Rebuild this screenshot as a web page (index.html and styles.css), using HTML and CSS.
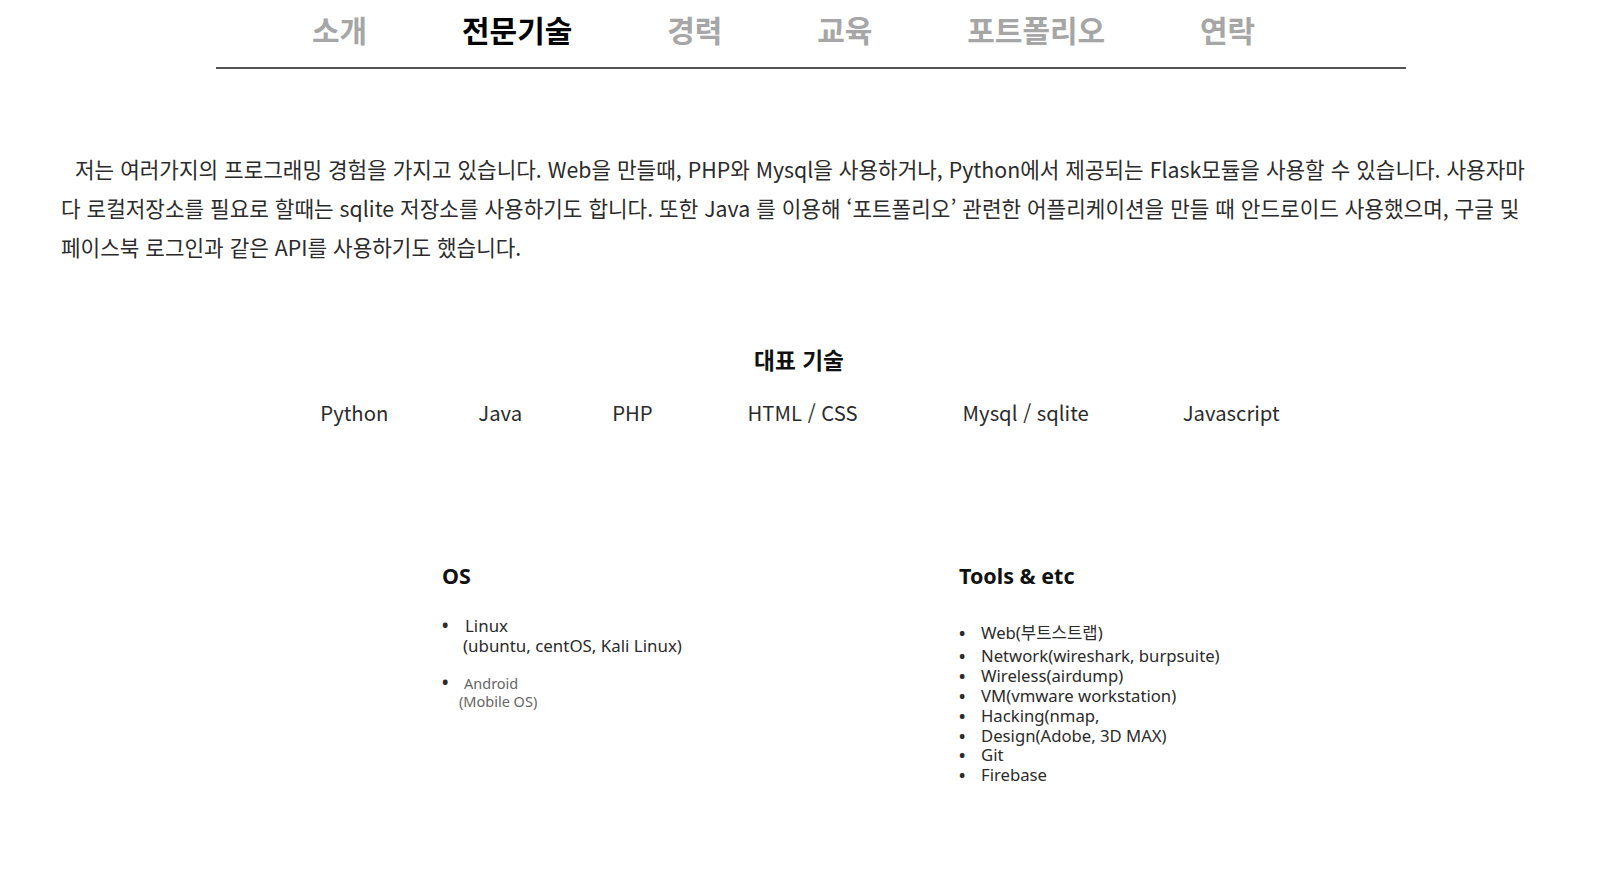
FILE: index.html
```html
<!DOCTYPE html>
<html lang="ko">
<head>
<meta charset="utf-8">
<title>전문기술</title>
<link rel="stylesheet" href="styles.css">
</head>
<body>
<header class="nav">
  <ul class="nav-list">
    <li class="nav-item">소개</li>
    <li class="nav-item active">전문기술</li>
    <li class="nav-item">경력</li>
    <li class="nav-item">교육</li>
    <li class="nav-item">포트폴리오</li>
    <li class="nav-item">연락</li>
  </ul>
</header>

<main>
  <p class="intro">저는 여러가지의 프로그래밍 경험을 가지고 있습니다. Web을 만들때, PHP와 Mysql을 사용하거나, Python에서 제공되는 Flask모듈을 사용할 수 있습니다. 사용자마<br>다 로컬저장소를 필요로 할때는 sqlite 저장소를 사용하기도 합니다. 또한 Java 를 이용해 ‘포트폴리오’ 관련한 어플리케이션을 만들 때 안드로이드 사용했으며, 구글 및<br>페이스북 로그인과 같은 API를 사용하기도 했습니다.</p>

  <h2 class="skills-title">대표 기술</h2>
  <ul class="skills">
    <li class="skill">Python</li>
    <li class="skill">Java</li>
    <li class="skill">PHP</li>
    <li class="skill wide">HTML / CSS</li>
    <li class="skill wider">Mysql / sqlite</li>
    <li class="skill last">Javascript</li>
  </ul>

  <section class="extra">
    <div class="col">
      <h3 class="col-title">OS</h3>
      <ul class="os-list">
        <li class="os-item"><span class="dot">•</span><span class="os-text">Linux<br><span class="os-sub">(ubuntu, centOS, Kali Linux)</span></span></li>
        <li class="os-item small"><span class="dot">•</span><span class="os-text">Android<br><span class="os-sub2">(Mobile OS)</span></span></li>
      </ul>
    </div>
    <div class="col">
      <h3 class="col-title">Tools &amp; etc</h3>
      <ul class="tools-list">
        <li class="tool first"><span class="dot">•</span>Web(부트스트랩)</li>
        <li class="tool"><span class="dot">•</span>Network(wireshark, burpsuite)</li>
        <li class="tool"><span class="dot">•</span>Wireless(airdump)</li>
        <li class="tool"><span class="dot">•</span>VM(vmware workstation)</li>
        <li class="tool"><span class="dot">•</span>Hacking(nmap,</li>
        <li class="tool"><span class="dot">•</span>Design(Adobe, 3D MAX)</li>
        <li class="tool"><span class="dot">•</span>Git</li>
        <li class="tool"><span class="dot">•</span>Firebase</li>
      </ul>
    </div>
  </section>
</main>
</body>
</html>
```

FILE: styles.css
```css
* { box-sizing: border-box; }
html, body {
  margin: 0;
  padding: 0;
  background: #fff;
}
body {
  font-family: "Noto Sans CJK KR", "Noto Sans", sans-serif;
  color: #222;
  width: 1598px;
}
ul { list-style: none; margin: 0; padding: 0; }
h2, h3, p { margin: 0; }

.nav {
  margin-left: 216px;
  width: 1190px;
  padding-top: 9px;
  padding-bottom: 18px;
  border-bottom: 2px solid #555;
}
.nav-list {
  display: flex;
  gap: 94.8px;
  padding-left: 96px;
}
.nav-item {
  font-size: 30px;
  line-height: 40px;
  font-weight: 700;
  color: #a6a6a6;
}
.nav-item.active { color: #000; }

.intro {
  margin-top: 80px;
  padding-left: 61px;
  font-size: 21.3px;
  line-height: 39px;
  color: #2b2b2b;
  text-indent: 14px;
  white-space: nowrap;
}

.skills-title {
  margin-top: 79px;
  text-align: center;
  font-size: 22.7px;
  line-height: 30px;
  font-weight: 700;
  color: #111;
}
.skills {
  margin-top: 22px;
  display: flex;
  justify-content: center;
  gap: 90px;
  font-size: 20.3px;
  line-height: 30px;
  color: #2b2b2b;
  padding-left: 2px;
}
.skill.wide { margin-left: 5px; }
.skill.wider { margin-left: 15px; }
.skill.last { margin-left: 4px; }

.extra {
  margin-top: 134px;
  display: grid;
  grid-template-columns: 517px 1fr;
  padding-left: 442px;
  font-family: "Noto Sans", "Noto Sans CJK KR", sans-serif;
}
.col-title {
  font-size: 21.5px;
  line-height: 30px;
  font-weight: 700;
  color: #111;
}
.dot {
  display: inline-block;
  width: 23px;
  flex: none;
  font-weight: 700;
}
.os-list {
  margin-top: 25px;
  font-size: 16.9px;
  line-height: 20px;
  color: #2b2b2b;
}
.os-item {
  display: flex;
  align-items: flex-start;
}
.os-text { display: block; }
.os-sub { margin-left: -2px; }
.os-item.small {
  margin-top: 18px;
  font-size: 14.5px;
  line-height: 18px;
  color: #666;
}
.os-item.small .dot { font-size: 16.9px; line-height: 18px; width: 22px; color: #2b2b2b; }
.os-sub2 { margin-left: -5px; }

.tools-list {
  margin-top: 32px;
  font-size: 16.7px;
  line-height: 19.9px;
  color: #2b2b2b;
}
.tool { display: flex; align-items: flex-start; }
.tool .dot { width: 22px; }
.tool.first { margin-bottom: 3px; }
```
